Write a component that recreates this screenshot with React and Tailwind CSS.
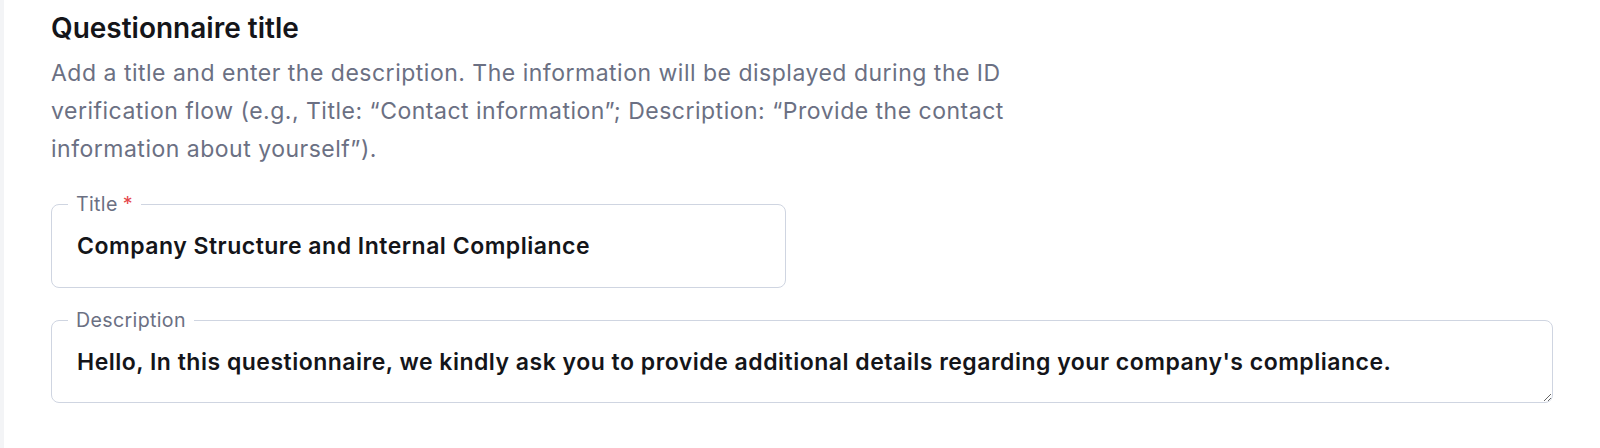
const font = { fontFamily: "Inter, 'Noto Sans', sans-serif" };

function Field({ label, required, className, children }) {
  return (
    <fieldset className={`rounded-[8px] border-[1.5px] border-[#cfd5e1] bg-white ${className}`}>
      <legend className="ml-[16px] px-[8px] text-[19.6px] leading-[20px] tracking-[0.35px] text-[#6b7083]">
        {label}
        {required && <span className="ml-[5px] text-[#e5484d]">*</span>}
      </legend>
      {children}
    </fieldset>
  );
}

export default function App() {
  return (
    <div className="flex min-h-screen bg-white" style={font}>
      <div className="w-[4px] shrink-0 bg-[#f3f4f6]" />
      <div className="flex-1 pl-[47px] pr-[47px] pt-[10px]">
        <h2 className="text-[28px] font-semibold leading-[36px] text-[#141519]">
          Questionnaire title
        </h2>
        <p className="mt-[8px] max-w-[975px] text-[23px] leading-[38px] tracking-[0.5px] text-[#6b7083]">
          Add a title and enter the description. The information will be displayed during the ID
          verification flow (e.g., Title: “Contact information”; Description: “Provide the contact
          information about yourself”).
        </p>

        <Field label="Title" required className="mt-[26px] w-[735px]">
          <input
            readOnly
            value="Company Structure and Internal Compliance"
            className="mb-[26px] mt-[17px] block h-[30px] w-full bg-transparent px-[25px] text-[23px] font-semibold leading-[30px] tracking-[0.5px] text-[#141519] outline-none"
          />
        </Field>

        <Field label="Description" className="mt-[22px]">
          <textarea
            readOnly
            rows={1}
            value="Hello, In this questionnaire, we kindly ask you to provide additional details regarding your company's compliance."
            className="block h-[72px] w-full resize-y rounded-b-[7px] bg-transparent px-[25px] pt-[17px] text-[23px] font-semibold leading-[30px] tracking-[0.5px] text-[#141519] outline-none"
          />
        </Field>
      </div>
    </div>
  );
}
